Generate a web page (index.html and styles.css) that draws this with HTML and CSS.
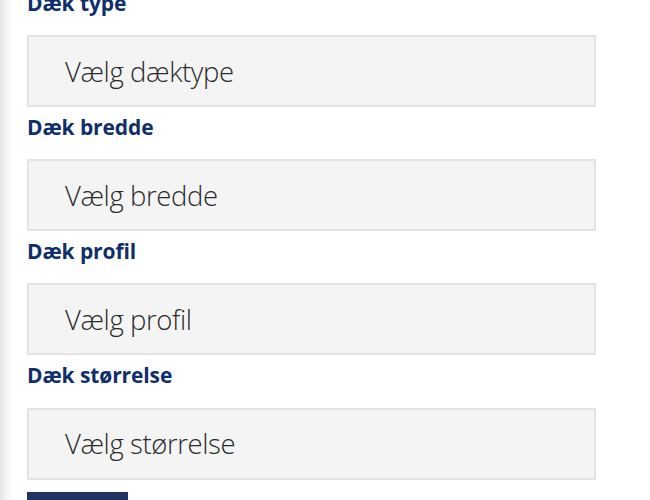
FILE: index.html
```html
<!DOCTYPE html>
<html lang="da">
<head>
<meta charset="utf-8">
<title>Dæk</title>
<link rel="stylesheet" href="styles.css">
</head>
<body>
<div class="page">
  <form class="form">
    <label class="label first">Dæk type</label>
    <div class="select">Vælg dæktype</div>
    <label class="label">Dæk bredde</label>
    <div class="select">Vælg bredde</div>
    <label class="label">Dæk profil</label>
    <div class="select">Vælg profil</div>
    <label class="label">Dæk størrelse</label>
    <div class="select">Vælg størrelse</div>
    <button type="button" class="btn" aria-label="Søg"></button>
  </form>
</div>
</body>
</html>
```
FILE: styles.css
```css
html, body {
  margin: 0;
  padding: 0;
  background: #ffffff;
  height: 500px;
  overflow: hidden;
}
.page {
  height: 500px;
  overflow: hidden;
  background: linear-gradient(to right, #e6e6e6 0px, #f3f3f3 6px, #ffffff 13px);
  padding-left: 27px;
  box-sizing: border-box;
}
.form {
  display: flex;
  flex-direction: column;
  align-items: flex-start;
  margin-top: -11.4px;
}
.label {
  display: block;
  font-family: "Open Sans", sans-serif;
  font-weight: 700;
  font-size: 21px;
  line-height: 28px;
  letter-spacing: -0.1px;
  color: #0f2f6b;
  margin: 5.8px 0 18.4px;
}
.label.first {
  margin-top: 0;
}
.select {
  box-sizing: border-box;
  width: 569px;
  height: 72px;
  background: #f4f4f4;
  border: 2px solid #e3e3e3;
  padding-left: 36px;
  display: flex;
  align-items: center;
  font-family: "Open Sans", sans-serif;
  font-weight: 300;
  font-size: 27.5px;
  letter-spacing: -0.4px;
  color: #2b2b2b;
}
.btn {
  margin-top: 12px;
  width: 101px;
  height: 40px;
  border: none;
  padding: 0;
  background: #1f3462;
}
```
